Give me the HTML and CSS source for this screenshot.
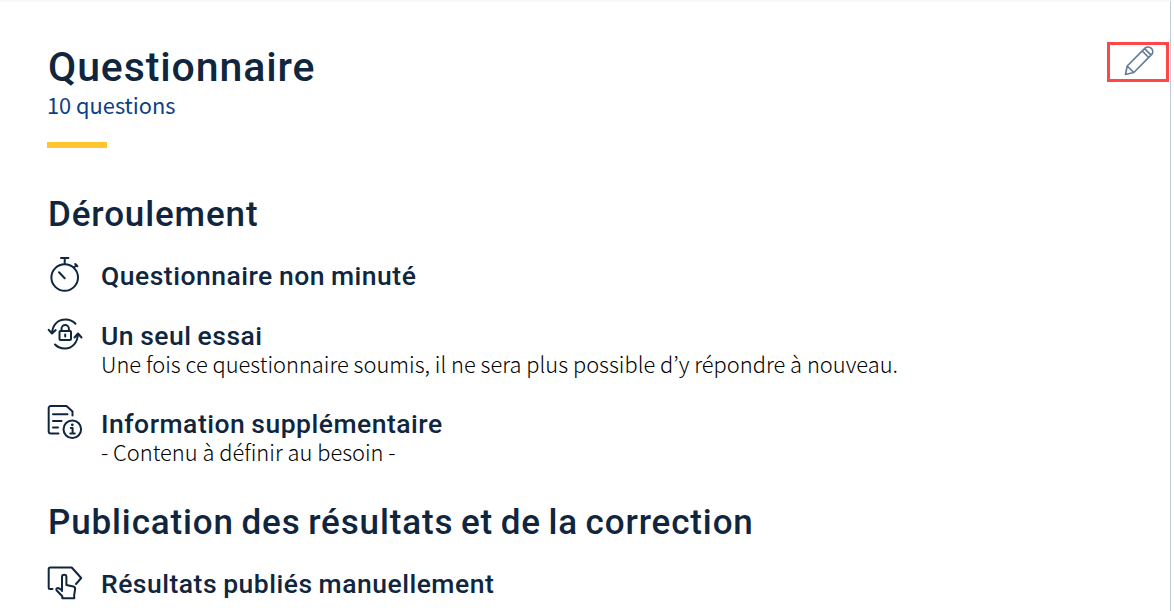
FILE: index.html
```html
<!DOCTYPE html>
<html lang="fr">
<head>
    <meta charset="UTF-8">
    <meta name="viewport" content="width=device-width, initial-scale=1.0">
    <title>Questionnaire</title>
    <link rel="stylesheet" href="styles.css">
</head>
<body>

<main class="page">
    <header class="header">
        <div>
            <h1>Questionnaire</h1>
            <p class="count">10 questions</p>
            <div class="accent"></div>
        </div>
        <button class="edit" aria-label="Modifier">
            <svg width="32" height="32" viewBox="0 0 32 32">
                <path d="M2.500 29.500 4.200 21 22 3.200a4.600 4.600 0 0 1 6.500 6.500L10.800 27.500z M4.200 21l6.600 6.500 M19.200 6l6.500 6.500 M21.600 3.600l6.500 6.500"/>
            </svg>
        </button>
    </header>

    <section>
        <h2>Déroulement</h2>
        <ul class="list">
            <li class="item">
                <svg class="icon" viewBox="0 0 36 36">
                    <circle cx="17.700" cy="20.500" r="13.300"/>
                    <path d="M17.700 7V1M14 1h7.400M27 10.500l2.500-2.500M28.200 7l2.200 2.200M12 15.200l5.700 6"/>
                </svg>
                <div class="text">
                    <h3>Questionnaire non minuté</h3>
                </div>
            </li>
            <li class="item">
                <svg class="icon" viewBox="0 0 36 36">
                    <path d="M5 16.500C5.500 7.500 11 2.500 18.500 2.500c4.500 0 7.500 1.500 10 4.200M1.700 12.800l3.300 3.700 3.700-3.400M31 17C30.500 26 25 31.500 18 31.500c-4.500 0-7.500-1.500-10-4M27.500 20.500l3.500-4 3.500 4"/>
                    <rect x="12.500" y="14" width="11.500" height="9" rx="1"/>
                    <path d="M14.500 14v-2.300a3.700 3.700 0 0 1 7.400 0V14M18.200 17.500v2"/>
                </svg>
                <div class="text">
                    <h3>Un seul essai</h3>
                    <p class="description">Une fois ce questionnaire soumis, il ne sera plus possible d’y répondre à nouveau.</p>
                </div>
            </li>
            <li class="item">
                <svg class="icon" viewBox="0 0 36 36">
                    <path d="M11.500 28.500H3.700a2 2 0 0 1-2-2V3a2 2 0 0 1 2-2H19.500l6 5.500v4M6 9.300h14.500M6 16h8.500M6 22.500H11"/>
                    <circle cx="25.300" cy="24.300" r="8.800"/>
                    <path d="M23.800 23H25.600v5.500M23.300 28.500h4.500"/>
                    <circle class="dot" cx="25.300" cy="19.800" r="1.400"/>
                </svg>
                <div class="text">
                    <h3>Information supplémentaire</h3>
                    <p class="description">- Contenu à définir au besoin -</p>
                </div>
            </li>
        </ul>
    </section>

    <section>
        <h2>Publication des résultats et de la correction</h2>
        <ul class="list">
            <li class="item">
                <svg class="icon" viewBox="0 0 36 36">
                    <path d="M5.500 24h-2.800a1 1 0 0 1-1-1V4a1.500 1.500 0 0 1 1.500-1.500h21.500L34.200 13l-5.200 6"/>
                    <path d="M15 26V12a2.200 2.200 0 0 1 4.400 0v8l7 1.500c1.500.4 1.800 1.300 1.700 2.700l-.9 6v3H15.300v-2L9.500 25.200c-.8-1.500.8-2.600 2-2l3.500 2"/>
                </svg>
                <div class="text">
                    <h3>Résultats publiés manuellement</h3>
                </div>
            </li>
        </ul>
    </section>
</main>

</body>
</html>
```

FILE: styles.css
```css
* {
    box-sizing: border-box;
}
body {
    margin: 0;
    height: 611px;
    overflow: hidden;
    background: #fff;
    font-family: "Noto Sans CJK KR", "Noto Sans", sans-serif;
}
.page {
    width: 1171px;
    height: 611px;
    padding: 40px 1px 0 47px;
    border-top: 2px solid #f8f9fa;
    border-right: 1px solid #bccad8;
}
.header {
    display: flex;
    justify-content: space-between;
    align-items: flex-start;
}
h1, h2, h3, p, ul {
    margin: 0;
    padding: 0;
}
h1, h2, h3 {
    font-family: Roboto, sans-serif;
    font-weight: 500;
    color: #10263f;
}
h1 {
    padding: 1px 0 0 1px;
    font-size: 41px;
    line-height: 48px;
    letter-spacing: 0.9px;
}
h2 {
    padding: 1px 0 0 1px;
    font-size: 35px;
    line-height: 44px;
    letter-spacing: 0.87px;
    word-spacing: -2px;
}
h3 {
    font-size: 26.5px;
    line-height: 30px;
    letter-spacing: 0.5px;
    word-spacing: -1px;
}
.count {
    font-size: 21.8px;
    line-height: 28px;
    color: #0c3f86;
}
.accent {
    width: 60px;
    height: 6px;
    margin: 23px 0 44px;
    background: #ffc42e;
}
.edit {
    display: flex;
    align-items: center;
    justify-content: center;
    width: 62px;
    height: 40px;
    padding: 0 0 2px 2px;
    border: 3px solid #ff4747;
    background: none;
    cursor: pointer;
}
.edit svg {
    fill: none;
    stroke: #647c98;
    stroke-width: 1.7;
    stroke-linejoin: round;
}
.list {
    display: flex;
    flex-direction: column;
    gap: 24px;
    margin: 20px 0 31px;
    list-style: none;
}
.item {
    display: flex;
    gap: 18px;
}
.icon {
    width: 36px;
    height: 36px;
    fill: none;
    stroke: #10263f;
    stroke-width: 2;
    stroke-linecap: round;
    stroke-linejoin: round;
}
.icon .dot {
    fill: #10263f;
    stroke: none;
}
.text {
    padding-top: 4px;
}
.description {
    margin-bottom: 4px;
    font-size: 21.85px;
    font-weight: 300;
    line-height: 26px;
    color: #000;
}
```
